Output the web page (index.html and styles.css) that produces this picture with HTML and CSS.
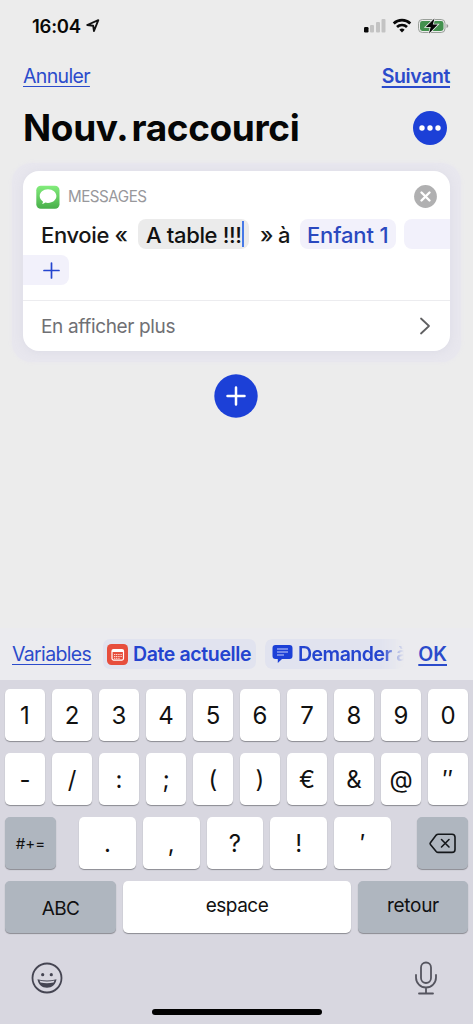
FILE: index.html
```html
<!DOCTYPE html>
<html lang="fr">
<head>
<meta charset="utf-8">
<title>Nouv. raccourci</title>
<link rel="stylesheet" href="styles.css">
</head>
<body>
<main class="screen">
  <header class="status">
    <span class="time">16:04</span>
    <svg class="locate" width="14" height="14" viewBox="0 0 14 14"><path d="M1.2 6 12.3 1.2 8 12 7.2 6.8Z" fill="none" stroke="#111" stroke-width="1.9" stroke-linejoin="round"/></svg>
    <svg class="indicators" width="86" height="18" viewBox="0 0 86 18">
      <rect x="1" y="10" width="4.5" height="5.5" rx="1.2" fill="#080808"/>
      <rect x="7" y="8" width="4" height="7.5" rx="1" fill="#c3c3c3"/>
      <rect x="13" y="5" width="4" height="10.5" rx="1" fill="#c3c3c3"/>
      <rect x="18.5" y="2" width="4" height="13.5" rx="1" fill="#c3c3c3"/>
      <g fill="none" stroke="#080808" stroke-width="2.7"><path d="M30.7 6.5a12 12 0 0 1 16.6 0"/><path d="M34 10a7.2 7.2 0 0 1 10 0"/></g>
      <path d="M36.4 12.8a3.8 3.8 0 0 1 5.2 0L39 15.6Z" fill="#080808"/>
      <rect x="55.500" y="2.500" width="26.500" height="13" rx="3.800" fill="none" stroke="#999f99"/>
      <rect x="57" y="4" width="23.500" height="10" rx="2.400" fill="#43914e"/>
      <path d="M83.500 7v4q1.800-.5 1.800-2t-1.800-2Z" fill="#999"/>
      <path d="M71.500 1.500 62.800 10h4.900L66 16.500l8.800-9h-5Z" fill="#050505" stroke="#ececec" stroke-width="1.600" paint-order="stroke"/>
    </svg>
  </header>
  <nav class="nav"><a class="link cancel">Annuler</a><a class="link next">Suivant</a></nav>
  <div class="heading">
    <h1 class="title">Nouv. raccourci</h1>
    <svg width="34" height="34" viewBox="0 0 34 34"><circle cx="17" cy="17" r="17" fill="#1c40d7"/><g fill="#fff"><circle cx="9" cy="17" r="2.700"/><circle cx="17" cy="17" r="2.700"/><circle cx="25" cy="17" r="2.700"/></g></svg>
  </div>
  <section class="halo">
    <div class="card">
      <div class="card-head">
        <svg width="24" height="24" viewBox="0 0 24 24"><defs><linearGradient id="green" x2="0" y2="1"><stop stop-color="#83ed7c"/><stop offset="1" stop-color="#47ae49"/></linearGradient></defs><rect x=".3" y=".8" width="23.200" height="23" rx="4.500" fill="url(#green)"/><path d="M12 4.300c4.800 0 8.400 3 8.400 6.800s-3.600 6.900-8.400 6.900c-1 0-2-.1-2.800-.4-.8.8-2 1.400-3.300 1.500.8-.8 1-1.600 1-2.600-2-1.200-3.200-3.200-3.200-5.400C3.700 7.300 7.200 4.300 12 4.300Z" fill="#fff"/></svg>
        <span class="app">MESSAGES</span>
        <svg class="close" width="23" height="23" viewBox="0 0 23 23"><circle cx="11.500" cy="11.500" r="11.400" fill="#b0b0b1"/><path d="m7.500 7.500 8 8m0-8-8 8" stroke="#fff" stroke-width="2.400" stroke-linecap="round"/></svg>
      </div>
      <div class="sentence">
        <span class="send">Envoie «</span>
        <span class="message">A table !!!<i class="caret"></i></span>
        <span class="to">» à</span>
        <span class="person">Enfant 1</span>
        <span class="pill-start"></span>
      </div>
      <div class="pill-end"><svg width="17" height="17" viewBox="0 0 17 17"><path d="M8.500 1v15M1 8.500h15" stroke="#2445cf" stroke-width="1.700" stroke-linecap="round"/></svg></div>
      <div class="more"><span>En afficher plus</span><svg width="12" height="18" viewBox="0 0 12 18"><path d="m2 1.500 8 7.500-8 7.500" fill="none" stroke="#606062" stroke-width="1.800" stroke-linecap="round" stroke-linejoin="round"/></svg></div>
    </div>
  </section>
  <div class="add"><svg width="44" height="44" viewBox="0 0 44 44"><circle cx="22" cy="22" r="21.700" fill="#1c40d7"/><path d="M22 13.500v17M13.500 22h17" stroke="#fff" stroke-width="2.500" stroke-linecap="round"/></svg></div>
  <div class="suggestions">
    <a class="link variables">Variables</a>
    <div class="chip date"><svg width="21" height="21" viewBox="0 0 21 21"><rect width="21" height="21" rx="4.500" fill="#e74e3d"/><rect x="5" y="5.600" width="11.500" height="10.500" rx="1.500" fill="none" stroke="#fff" stroke-width="1.200"/><path d="M5 7h11.500" stroke="#fff" stroke-width="2"/><path d="M7 10.500h8M7 12.500h8M7 14.300h6" stroke="#ffd3cd" stroke-width="1" stroke-dasharray="1.200 .6"/></svg><span class="date-label">Date actuelle</span></div>
    <div class="chip ask"><svg width="21" height="20" viewBox="0 0 21 20"><path d="M3.500 1h14A3 3 0 0 1 20.500 4v8a3 3 0 0 1-3 3H10l-4.200 4v-4H3.500a3 3 0 0 1-3-3V4a3 3 0 0 1 3-3Z" fill="#1c40d7"/><path d="M5 5h11M5 8h11M5 11h7" stroke="#c7d0fb" stroke-width="1.100"/></svg><span class="ask-label">Demander à</span></div>
    <a class="link ok">OK</a>
  </div>
  <section class="keyboard">
    <div class="row ten"><b class="key">1</b><b class="key">2</b><b class="key">3</b><b class="key">4</b><b class="key">5</b><b class="key">6</b><b class="key">7</b><b class="key">8</b><b class="key">9</b><b class="key">0</b></div>
    <div class="row ten"><b class="key">-</b><b class="key">/</b><b class="key">:</b><b class="key">;</b><b class="key">(</b><b class="key">)</b><b class="key">€</b><b class="key">&amp;</b><b class="key">@</b><b class="key quote">″</b></div>
    <div class="row punctuation"><b class="key gray symbols">#+=</b><div class="marks"><b class="key">.</b><b class="key">,</b><b class="key">?</b><b class="key">!</b><b class="key">′</b></div><b class="key gray"><svg width="27" height="21" viewBox="0 0 27 21"><path d="M9.200 1.200H23a3 3 0 0 1 3 3v12.200a3 3 0 0 1-3 3H9.200q-1.200 0-2-.9l-5.600-6.700q-1-1.200 0-2.400l5.600-7.300q.8-.9 2-.9Z" fill="none" stroke="#14171a" stroke-width="1.600"/><path d="m12.500 6.500 7.500 7.500m0-7.500-7.500 7.500" stroke="#14171a" stroke-width="1.600" stroke-linecap="round"/></svg></b></div>
    <div class="row bottom"><b class="key gray abc">ABC</b><b class="key space">espace</b><b class="key gray return">retour</b></div>
    <div class="tools">
      <svg width="32" height="32" viewBox="0 0 32 32"><circle cx="16" cy="16" r="14.500" fill="none" stroke="#454552" stroke-width="1.800"/><circle cx="11.700" cy="12.700" r="1.600" fill="#454552"/><circle cx="20.300" cy="12.700" r="1.600" fill="#454552"/><path d="M6.500 17.200q9.500 2.400 19 0c-.7 5.200-4.500 8.500-9.500 8.500s-8.800-3.300-9.500-8.500Z" fill="#454552"/><path d="M8.500 18.600q7.500 1.700 15 0l-.9 2q-6.600 1.500-13.200 0Z" fill="#d8d7e0"/></svg>
      <svg width="24" height="34" viewBox="0 0 24 34"><g fill="none" stroke="#55555f" stroke-width="1.800" stroke-linecap="round"><rect x="7" y="1.500" width="10" height="20.500" rx="5"/><path d="M2 14v2.500a10 10 0 0 0 20 0V14M12 26.500v6M5 32.500h14"/></g></svg>
    </div>
    <div class="home"></div>
  </section>
</main>
</body>
</html>
```
FILE: styles.css
```css
* { box-sizing: border-box; }
body { margin: 0; font-family: Inter, "Liberation Sans", sans-serif; background: #ececec; }
svg { display: block; flex-shrink: 0; }
.screen { width: 473px; height: 1024px; display: flex; flex-direction: column; overflow: hidden; background: #ececec; }
.status { height: 52px; padding: 17px 24px 0 32px; display: flex; align-items: flex-start; }
.time { font-size: 18.500px; line-height: 19px; font-weight: 600; letter-spacing: -.25px; width: 54px; color: #080808; }
.locate { margin-top: 2px; }
.indicators { margin-left: auto; }
.nav { height: 48px; padding: 12px 23px 0; display: flex; justify-content: space-between; }
.link { color: #2b4bcb; font-size: 19.500px; line-height: 24px; text-decoration: underline; text-decoration-thickness: 1.300px; text-underline-offset: 3px; text-decoration-skip-ink: none; white-space: nowrap; }
.cancel { letter-spacing: -.65px; }
.next { font-weight: 600; letter-spacing: -.4px; text-decoration-thickness: 2px; }
.heading { height: 56px; margin-bottom: 7px; padding: 0 26px 0 23px; display: flex; align-items: center; justify-content: space-between; }
.title { margin: 0; font-size: 37px; line-height: 46px; letter-spacing: -.37px; word-spacing: -4px; font-weight: 700; color: #060606; white-space: nowrap; }
.halo { margin: 0 12px; height: 199px; padding: 8px 11px 11px; border-radius: 20px; background: #e8e7ee; box-shadow: 0 0 4px #e8e7ee; }
.card { height: 180px; border-radius: 16px; background: #fff; overflow: hidden; box-shadow: 0 1px 9px #c9c9da60; }
.card-head { height: 48px; padding: 14px 13px 0; display: flex; align-items: flex-start; }
.app { margin-left: 8px; line-height: 24px; font-size: 15.200px; letter-spacing: -.5px; color: #98989c; }
.close { margin-left: auto; }
.sentence { height: 32px; padding-left: 18px; display: flex; font-size: 22px; line-height: 32px; letter-spacing: -.35px; font-weight: 500; color: #171717; white-space: nowrap; }
.send { width: 97px; }
.message { width: 111px; height: 30px; border-radius: 8px; background: #ebebeb; padding: 2px 0 0 8px; display: flex; align-items: center; color: #111; }
.caret { width: 2px; height: 26px; margin-top: -2px; background: #4679e7; }
.to { width: 51px; padding-left: 11px; letter-spacing: -.6px; }
.person { width: 96px; height: 30px; border-radius: 8px; background: #f2f1fb; padding-left: 7px; color: #2a49bf; letter-spacing: -.15px; }
.pill-start { margin-left: 8px; flex: 1; height: 30px; border-radius: 8px 0 0 8px; background: #f2f1fb; }
.pill-end { margin-top: 4px; width: 46px; height: 30px; border-radius: 0 8px 8px 0; background: #f2f1fb; display: flex; align-items: center; padding-left: 20px; }
.more { margin-top: 15px; height: 51px; border-top: 1px solid #ececef; padding: 0 19px 0 18px; display: flex; align-items: center; justify-content: space-between; color: #707074; font-size: 19px; letter-spacing: -.35px; }
.add { margin: 12px 1px 0 0; display: flex; justify-content: center; }
.suggestions { margin-top: auto; height: 52px; display: flex; padding: 11px 26px 0 12px; background: #ebebef; }
.suggestions .link { line-height: 30px; }
.variables { width: 91px; letter-spacing: -.65px; }
.chip { height: 30px; border-radius: 7px; display: flex; align-items: center; color: #2444cf; font-weight: 600; font-size: 19.500px; white-space: nowrap; }
.date { width: 153px; padding-left: 4px; background: #e1e3ef; }
.date-label { margin-left: 5px; letter-spacing: -.38px; }
.ask { width: 139px; margin-left: 9px; padding-left: 7px; background: #e1e3ef; -webkit-mask-image: linear-gradient(90deg, #000 84%, transparent); mask-image: linear-gradient(90deg, #000 84%, transparent); }
.ask-label { margin-left: 5px; letter-spacing: -.5px; }
.ok { margin-left: auto; font-weight: 600; text-decoration-thickness: 2px; }
.keyboard { height: 344px; padding: 9px 5px 0; background: #d8d7e0; display: flex; flex-direction: column; gap: 12px; }
.row { height: 52px; display: grid; gap: 7px; }
.ten { grid-template-columns: repeat(10, 1fr); }
.key { display: flex; align-items: center; justify-content: center; border-radius: 5px; background: #fff; box-shadow: 0 1px 1px #8b8b92; color: #111; font-weight: 400; font-size: 24px; }
.gray { background: #afb6bf; }
.quote { letter-spacing: .5px; }
.punctuation { grid-template-columns: 51px 1fr 51px; gap: 23px; }
.marks { display: grid; grid-template-columns: repeat(5, 1fr); gap: 7px; margin-right: 3px; }
.symbols { font-size: 15px; }
.bottom { grid-template-columns: 111px 1fr 110px; }
.abc { font-size: 19px; letter-spacing: -.7px; padding-top: 2px; }
.space, .return { font-size: 19px; padding-bottom: 3px; letter-spacing: -.5px; }
.return { letter-spacing: -.3px; }
.tools { display: flex; justify-content: space-between; align-items: center; height: 34px; padding: 0 30px 0 26px; margin-top: 16px; }
.home { width: 170px; height: 6px; border-radius: 3px; background: #020202; align-self: center; margin-top: 2px; }
```
